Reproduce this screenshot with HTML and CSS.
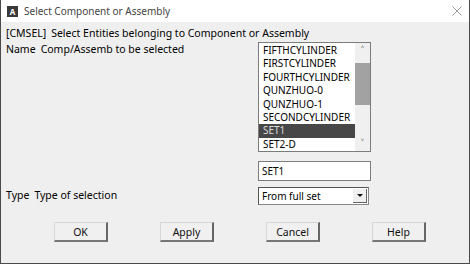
FILE: index.html
```html
<!DOCTYPE html>
<html lang="en">
<head>
  <meta charset="UTF-8">
  <title>Select Component or Assembly</title>
  <link rel="stylesheet" href="styles.css">
</head>
<body>
  <div class="window">
    <!-- Title bar -->
    <div class="titlebar">
      <span class="app-icon">A</span>
      <span class="title">Select Component or Assembly</span>
      <svg class="close" width="10" height="10" viewBox="0 0 10 10">
        <path d="M0.5 0.5 L9.5 9.5 M9.5 0.5 L0.5 9.5" stroke="#9a9a9a" stroke-width="1" fill="none"/>
      </svg>
    </div>

    <div class="content">
      <div class="heading">[CMSEL]<span class="sp">Select Entities belonging to Component or Assembly</span></div>

      <div class="row row-name">
        <div class="label">Name<span class="sp">Comp/Assemb to be selected</span></div>
        <div class="listbox">
          <ul class="items">
            <li>FIFTHCYLINDER</li>
            <li>FIRSTCYLINDER</li>
            <li>FOURTHCYLINDER</li>
            <li>QUNZHUO-0</li>
            <li>QUNZHUO-1</li>
            <li>SECONDCYLINDER</li>
            <li class="selected">SET1</li>
            <li>SET2-D</li>
          </ul>
          <div class="scrollbar">
            <span class="arrow">&#708;</span>
            <div class="track"><div class="thumb"></div></div>
            <span class="arrow">&#709;</span>
          </div>
        </div>
      </div>

      <div class="row row-text">
        <div class="label"></div>
        <div class="textbox">SET1</div>
      </div>

      <div class="row row-type">
        <div class="label">Type<span class="sp">Type of selection</span></div>
        <div class="combo">
          <span class="combo-value">From full set</span>
          <span class="combo-btn"><span class="tri"></span></span>
        </div>
      </div>

      <div class="buttons">
        <button>OK</button>
        <button>Apply</button>
        <button>Cancel</button>
        <button>Help</button>
      </div>
    </div>
  </div>
</body>
</html>
```

FILE: styles.css
```css
/* Dialog window */
body, html {
  margin: 0;
  padding: 0;
  font-family: "Noto Sans", "Open Sans", sans-serif;
  font-size: 10.5px;
  color: #000;
}

.window {
  width: 470px;
  height: 264px;
  box-sizing: border-box;
  border: 1px solid #4a4a4a;
  border-top: none;
  background: #efefef;
  display: flex;
  flex-direction: column;
}

/* Title bar */
.titlebar {
  height: 22px;
  background: #fff;
  display: flex;
  align-items: center;
  padding-left: 6px;
  padding-right: 6px;
}

.app-icon {
  width: 11px;
  height: 11px;
  background: #3a3a3a;
  color: #fff;
  font-size: 8px;
  font-weight: bold;
  line-height: 11px;
  text-align: center;
}

.title {
  margin-left: 6px;
  font-size: 10px;
  color: #444;
  flex: 1;
}

.close {
  margin-right: 1px;
}

/* Body */
.content {
  flex: 1;
  padding: 4px 0 0 5px;
  display: flex;
  flex-direction: column;
}

.heading {
  height: 15px;
  line-height: 15px;
}

.sp {
  margin-left: 5px;
}

.row {
  display: flex;
}

.label {
  width: 252px;
}

.row-name {
  margin-top: 1px;
}

.row-name .label {
  line-height: 15px;
}

/* List box */
.listbox {
  width: 113px;
  height: 110px;
  box-sizing: border-box;
  border: 1px solid #7c7c7c;
  background: #fff;
  display: flex;
}

.items {
  list-style: none;
  margin: 0;
  padding: 1px 0 0 0;
  flex: 1;
}

.items li {
  height: 13.4px;
  line-height: 13.4px;
  padding-left: 4px;
  font-size: 10px;
}

.items li.selected {
  background: #474747;
  color: #ddd;
}

.scrollbar {
  width: 15px;
  display: flex;
  flex-direction: column;
  align-items: center;
  background: #f0f0f0;
}

.arrow {
  height: 15px;
  line-height: 15px;
  font-size: 10px;
  color: #333;
}

.track {
  flex: 1;
  width: 100%;
}

.thumb {
  margin-top: 5px;
  height: 42px;
  background: #a2a2a2;
}

/* Text box */
.row-text {
  margin-top: 9px;
}

.textbox {
  width: 113px;
  height: 20px;
  box-sizing: border-box;
  border: 1px solid #7c7c7c;
  background: #fff;
  padding-left: 3px;
  line-height: 18px;
  font-size: 10px;
}

/* Combo */
.row-type {
  margin-top: 4px;
  align-items: center;
}

.combo {
  width: 111px;
  height: 18px;
  margin-top: 2px;
  box-sizing: border-box;
  border: 1px solid #888;
  border-top-color: #555;
  border-left-color: #555;
  background: #fff;
  display: flex;
  align-items: center;
}

.combo-value {
  flex: 1;
  padding-left: 3px;
  font-size: 10px;
}

.combo-btn {
  width: 14px;
  height: 14px;
  margin-right: 1px;
  background: #f0f0f0;
  border-right: 1px solid #666;
  border-bottom: 1px solid #666;
  box-sizing: border-box;
  display: flex;
  align-items: center;
  justify-content: center;
}

.tri {
  width: 0;
  height: 0;
  border-left: 3px solid transparent;
  border-right: 3px solid transparent;
  border-top: 3px solid #111;
}

/* Buttons */
.buttons {
  display: flex;
  gap: 52px;
  margin-top: 17px;
  padding-left: 48px;
}

button {
  width: 54px;
  height: 20px;
  padding: 0;
  background: #f0f0f0;
  border: 1px solid #d6d6d6;
  border-right: 2px solid #666;
  border-bottom: 2px solid #777;
  font-family: "Noto Sans", "Open Sans", sans-serif;
  font-size: 10.5px;
  color: #111;
}
```
